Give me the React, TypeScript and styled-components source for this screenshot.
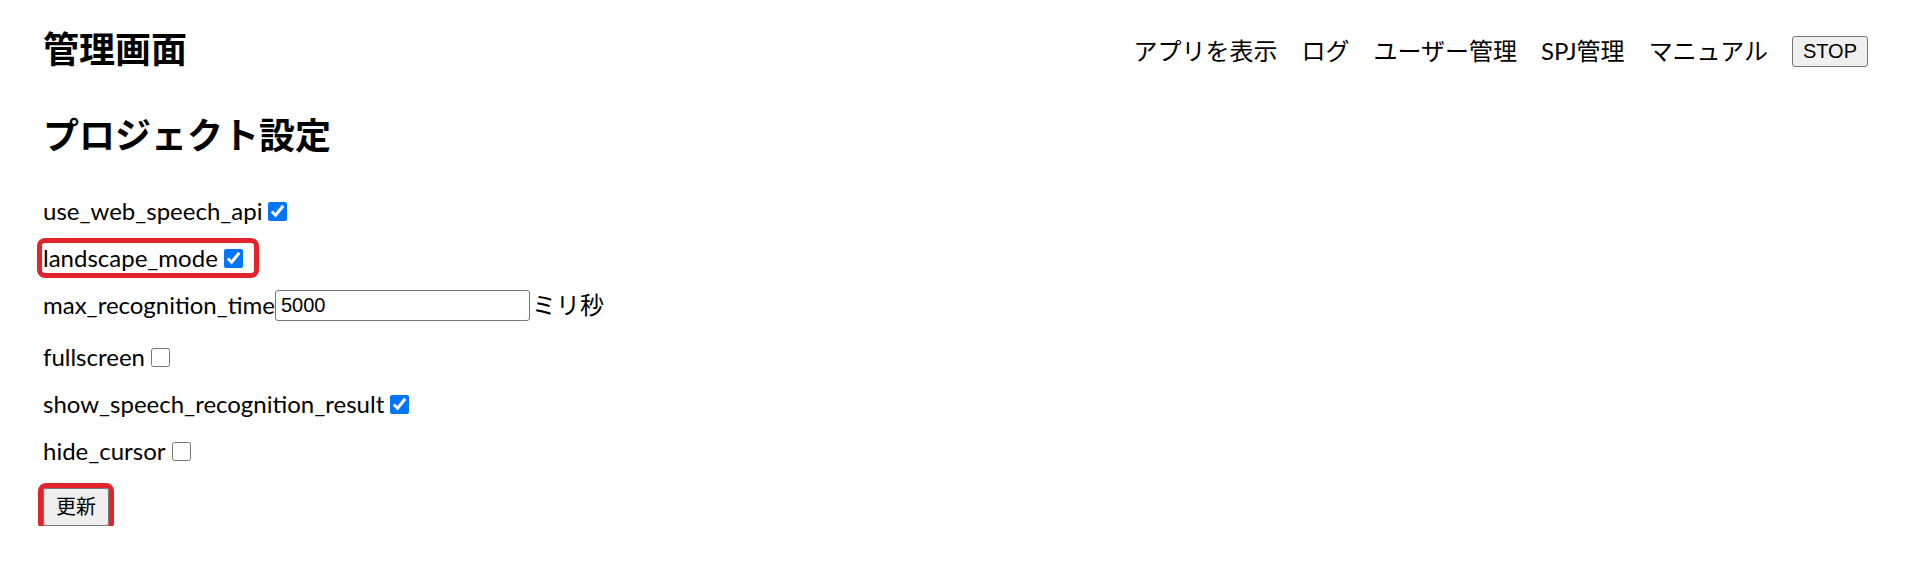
import styled, { createGlobalStyle } from 'styled-components';

const GlobalStyle = createGlobalStyle`
	html,
	body {
		margin: 0;
		padding: 0;
		background: #fff;
	}

	body {
		font-family: Lato, "Noto Sans CJK JP", sans-serif;
		font-size: 24px;
		color: #000;
	}
`;

const Page = styled.div`
	padding: 25px 41px 0 43px;
`;

const Header = styled.header`
	display: flex;
	align-items: flex-start;
	justify-content: space-between;
`;

const Title = styled.h1`
	margin: 0;
	font-family: "Noto Sans CJK JP", sans-serif;
	font-size: 36px;
	font-weight: 700;
	line-height: 44px;
`;

const Nav = styled.nav`
	display: flex;
	align-items: center;
	gap: 24px;
	margin-top: 8px;
	height: 36px;
`;

const NavLink = styled.a`
	color: #000;
	text-decoration: none;
	line-height: 36px;
	white-space: nowrap;
`;

const Button = styled.button<{ $marked?: boolean }>`
	font-family: "Liberation Sans", "Noto Sans CJK JP", sans-serif;
	font-size: 20px;
	line-height: 23px;
	color: #000;
	background: #efefef;
	border: 1px solid #767676;
	border-radius: 3px;
	padding: 3px 10px;
	margin: 0;
	outline: ${({ $marked }) => ($marked ? '5px solid #e3232b' : 'none')};
	outline-offset: 0;
`;

const SubmitButton = styled(Button)`
	min-width: 64px;
	line-height: 28px;
	padding: 4px 12px;
`;

const SectionTitle = styled.h2`
	margin: 42px 0 0;
	font-family: "Noto Sans CJK JP", sans-serif;
	font-size: 36px;
	font-weight: 700;
	line-height: 44px;
`;

const Form = styled.form`
	display: flex;
	flex-direction: column;
	align-items: flex-start;
	margin-top: 42px;
`;

const Row = styled.div<{ $marked?: boolean; $tall?: boolean }>`
	display: flex;
	align-items: center;
	height: 28px;
	line-height: 28px;
	margin-bottom: ${({ $tall }) => ($tall ? '24px' : '19px')};
	padding-right: ${({ $marked }) => ($marked ? '6px' : '0')};
	border-radius: 2px;
	outline: ${({ $marked }) => ($marked ? '5px solid #e3232b' : 'none')};
	outline-offset: 1px;
`;

const Check = styled.input.attrs({ type: 'checkbox' })`
	width: 19px;
	height: 19px;
	margin: 0 4px 0 6px;
	accent-color: #0075ff;
`;

const TextField = styled.input`
	box-sizing: border-box;
	width: 255px;
	height: 31px;
	margin: 0;
	padding: 1px 5px;
	border: 1px solid #767676;
	border-radius: 3px;
	font-family: "Liberation Sans", sans-serif;
	font-size: 20px;
	color: #000;
`;

const Unit = styled.span`
	margin-left: 2px;
`;

const Footer = styled.div`
	margin-top: 4px;
`;

type Setting = {
	name: string;
	checked: boolean;
	marked?: boolean;
};

const before: Setting[] = [
	{ name: 'use_web_speech_api', checked: true },
	{ name: 'landscape_mode', checked: true, marked: true }
];

const after: Setting[] = [
	{ name: 'fullscreen', checked: false },
	{ name: 'show_speech_recognition_result', checked: true },
	{ name: 'hide_cursor', checked: false }
];

const CheckRow = ({ name, checked, marked }: Setting) => (
	<Row $marked={marked}>
		{name}
		<Check defaultChecked={checked} />
	</Row>
);

export default function App() {
	return (
		<>
			<GlobalStyle />
			<Page>
				<Header>
					<Title>管理画面</Title>
					<Nav>
						<NavLink href="#">アプリを表示</NavLink>
						<NavLink href="#">ログ</NavLink>
						<NavLink href="#">ユーザー管理</NavLink>
						<NavLink href="#">SPJ管理</NavLink>
						<NavLink href="#">マニュアル</NavLink>
						<Button type="button">STOP</Button>
					</Nav>
				</Header>
				<SectionTitle>プロジェクト設定</SectionTitle>
				<Form onSubmit={(e) => e.preventDefault()}>
					{before.map((s) => (
						<CheckRow key={s.name} {...s} />
					))}
					<Row $tall>
						max_recognition_time
						<TextField type="text" defaultValue="5000" />
						<Unit>ミリ秒</Unit>
					</Row>
					{after.map((s) => (
						<CheckRow key={s.name} {...s} />
					))}
					<Footer>
						<SubmitButton type="submit" $marked>
							更新
						</SubmitButton>
					</Footer>
				</Form>
			</Page>
		</>
	);
}
